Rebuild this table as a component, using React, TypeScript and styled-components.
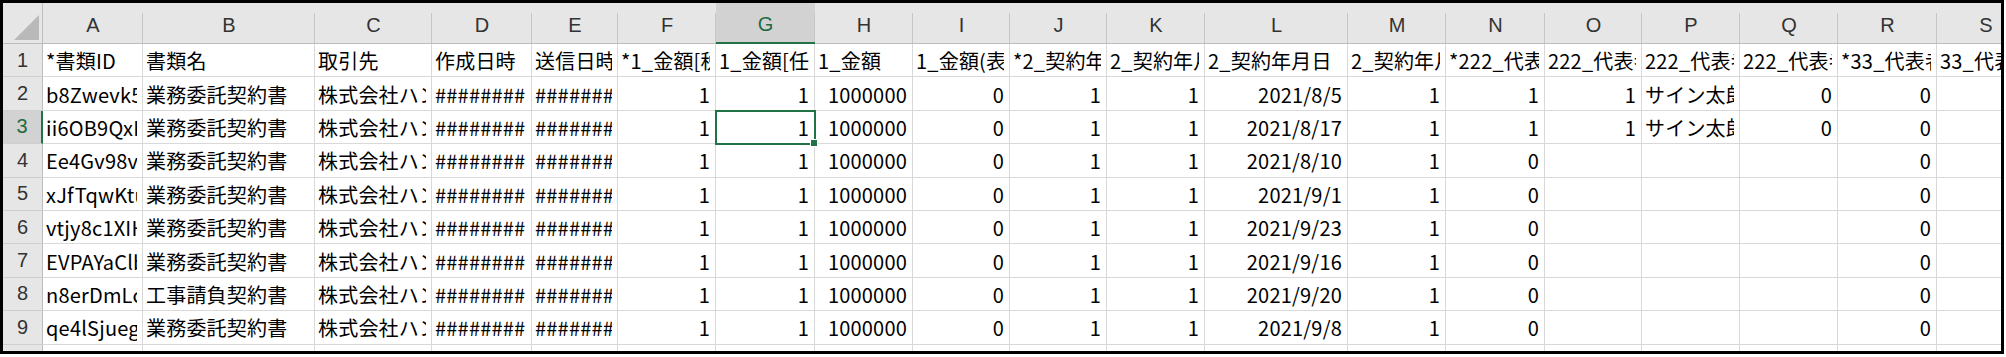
import React from 'react';
import styled, { createGlobalStyle } from 'styled-components';

const GlobalStyle = createGlobalStyle`
  html, body {
    margin: 0;
    padding: 0;
    background: #ffffff;
  }
  body {
    font-family: 'Noto Sans CJK JP', 'Noto Sans', sans-serif;
  }
`;

const GREEN = '#217346';
const GRID = '#d9d9d9';
const HEAD_BG = '#e6e6e6';
const HEAD_ACTIVE_BG = '#d2d2d2';

const COLUMNS = ['A', 'B', 'C', 'D', 'E', 'F', 'G', 'H', 'I', 'J', 'K', 'L', 'M', 'N', 'O', 'P', 'Q', 'R', 'S'];
const WIDTHS = [100, 172, 117, 100, 86, 98, 99, 98, 97, 97, 98, 143, 98, 99, 97, 98, 98, 99, 98];

const HEADERS = [
  '*書類ID', '書類名', '取引先', '作成日時', '送信日時', '*1_金額[税込]', '1_金額[任意]', '1_金額',
  '1_金額(表示用)', '*2_契約年月日', '2_契約年月日', '2_契約年月日', '2_契約年月日(表示)',
  '*222_代表者名', '222_代表者名', '222_代表者名', '222_代表者名', '*33_代表者名', '33_代表者名',
];

const IDS = ['b8Zwevk5QmT', 'ii6OB9QxKrp', 'Ee4Gv98vWnd', 'xJfTqwKtuYs', 'vtjy8c1XIHa', 'EVPAYaClbZe', 'n8erDmLcoPq', 'qe4lSjuegiR', 'Tz7pWmVbq2x'];
const TITLES = ['業務委託契約書', '業務委託契約書', '業務委託契約書', '業務委託契約書', '業務委託契約書', '業務委託契約書', '工事請負契約書', '業務委託契約書', '業務委託契約書'];
const DATES = ['2021/8/5', '2021/8/17', '2021/8/10', '2021/9/1', '2021/9/23', '2021/9/16', '2021/9/20', '2021/9/8', '2021/9/2'];

const dataRows: string[][] = IDS.map((id, i) => {
  const signed = i < 2;
  return [
    id, TITLES[i], '株式会社ハンコ', '########', '#######', '1', '1', '1000000', '0', '1', '1',
    DATES[i], '1', signed ? '1' : '0', signed ? '1' : '', signed ? 'サイン太郎' : '', signed ? '0' : '', '0', '',
  ];
});

const ROWS = [HEADERS, ...dataRows];
const ACTIVE_ROW = 3;
const ACTIVE_COL = 6;

const isNumeric = (v: string) => /^[\d/]+$/.test(v);

const Frame = styled.div`
  width: 2004px;
  height: 354px;
  box-sizing: border-box;
  border: 3px solid #000000;
  overflow: hidden;
  background: #ffffff;
`;

const Sheet = styled.div<{ $cols: string }>`
  display: grid;
  grid-template-columns: ${(p) => p.$cols};
  grid-template-rows: 41px;
  grid-auto-rows: 33.4px;
  color: #000000;
  font-size: 20px;
`;

const Corner = styled.div`
  box-sizing: border-box;
  background: ${HEAD_BG};
  border-right: 1px solid #bdbdbd;
  border-bottom: 1px solid #bdbdbd;
  display: flex;
  align-items: flex-end;
  justify-content: flex-end;
  padding: 0 3px 3px 0;
`;

const ColHead = styled.div<{ $active?: boolean }>`
  box-sizing: border-box;
  display: flex;
  align-items: center;
  justify-content: center;
  padding-top: 4px;
  font-family: 'Liberation Sans', 'Noto Sans', sans-serif;
  font-size: 20px;
  color: ${(p) => (p.$active ? '#1d6b40' : '#333333')};
  background:
    linear-gradient(#c6c6c6, #c6c6c6) right bottom / 1px calc(100% - 10px) no-repeat,
    ${(p) => (p.$active ? HEAD_ACTIVE_BG : HEAD_BG)};
  border-bottom: ${(p) => (p.$active ? `2px solid ${GREEN}` : '1px solid #bdbdbd')};
`;

const RowHead = styled.div<{ $active?: boolean }>`
  box-sizing: border-box;
  display: flex;
  align-items: center;
  justify-content: center;
  font-family: 'Liberation Sans', 'Noto Sans', sans-serif;
  font-size: 20px;
  color: ${(p) => (p.$active ? '#1d6b40' : '#333333')};
  background: ${(p) => (p.$active ? HEAD_ACTIVE_BG : HEAD_BG)};
  border-right: ${(p) => (p.$active ? `2px solid ${GREEN}` : '1px solid #bdbdbd')};
  border-bottom: 1px solid #cfcfcf;
`;

const Cell = styled.div<{ $right?: boolean; $selected?: boolean }>`
  box-sizing: border-box;
  position: relative;
  display: flex;
  align-items: center;
  min-width: 0;
  padding: 1px 5px 0 3px;
  border-right: 1px solid ${GRID};
  border-bottom: 1px solid ${GRID};
  outline: ${(p) => (p.$selected ? `2px solid ${GREEN}` : 'none')};
  outline-offset: -1px;
  z-index: ${(p) => (p.$selected ? 2 : 'auto')};
`;

const CellText = styled.span<{ $right?: boolean }>`
  flex: 1;
  min-width: 0;
  overflow: hidden;
  white-space: nowrap;
  text-align: ${(p) => (p.$right ? 'right' : 'left')};
  letter-spacing: 0.2px;
`;

const FillHandle = styled.span`
  position: absolute;
  right: -4px;
  bottom: -4px;
  width: 6px;
  height: 6px;
  background: ${GREEN};
  border: 1px solid #ffffff;
`;

const CornerTriangle = () => (
  <svg width="25" height="25" viewBox="0 0 25 25">
    <polygon points="25,0 25,25 0,25" fill="#b9b9b9" />
  </svg>
);

export default function App() {
  const cols = ['40px', ...WIDTHS.map((w) => `${w}px`)].join(' ');
  return (
    <>
      <GlobalStyle />
      <Frame>
        <Sheet $cols={cols}>
          <Corner>
            <CornerTriangle />
          </Corner>
          {COLUMNS.map((c, ci) => (
            <ColHead key={c} $active={ci === ACTIVE_COL}>
              {c}
            </ColHead>
          ))}
          {ROWS.map((row, ri) => (
            <React.Fragment key={ri}>
              <RowHead $active={ri + 1 === ACTIVE_ROW}>{ri + 1}</RowHead>
              {row.map((v, ci) => {
                const selected = ri + 1 === ACTIVE_ROW && ci === ACTIVE_COL;
                const right = ri > 0 && isNumeric(v);
                return (
                  <Cell key={ci} $selected={selected}>
                    <CellText $right={right}>{v}</CellText>
                    {selected && <FillHandle />}
                  </Cell>
                );
              })}
            </React.Fragment>
          ))}
        </Sheet>
      </Frame>
    </>
  );
}
